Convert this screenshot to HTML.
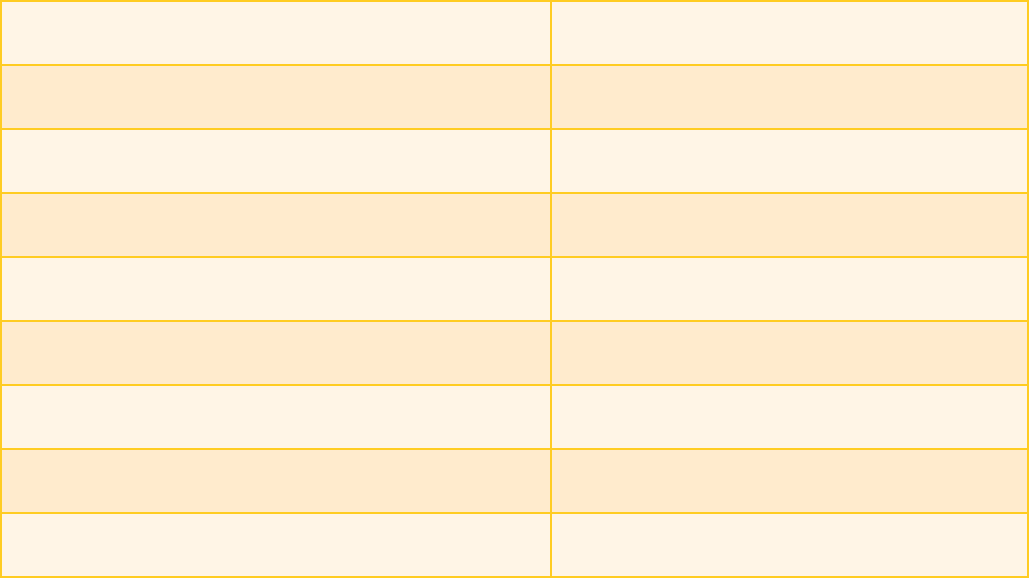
<!DOCTYPE html>
<html><head><meta charset="utf-8"><style>
html,body{margin:0;padding:0;width:1030px;height:579px;background:#fff;overflow:hidden}
.r{position:absolute;left:0;width:1029px;height:64px}
.a{background:#fff5e6}.b{background:#ffebcd}
.h{position:absolute;left:0;width:1029px;height:2px;background:#ffcc22}
.v{position:absolute;top:0;width:2px;height:578px;background:#ffcc22}
</style></head><body>
<div class="r a" style="top:0"></div>
<div class="r b" style="top:64px"></div>
<div class="r a" style="top:128px"></div>
<div class="r b" style="top:192px"></div>
<div class="r a" style="top:256px"></div>
<div class="r b" style="top:320px"></div>
<div class="r a" style="top:384px"></div>
<div class="r b" style="top:448px"></div>
<div class="r a" style="top:512px"></div>
<div class="h" style="top:0"></div>
<div class="h" style="top:64px"></div>
<div class="h" style="top:128px"></div>
<div class="h" style="top:192px"></div>
<div class="h" style="top:256px"></div>
<div class="h" style="top:320px"></div>
<div class="h" style="top:384px"></div>
<div class="h" style="top:448px"></div>
<div class="h" style="top:512px"></div>
<div class="h" style="top:576px"></div>
<div class="v" style="left:0"></div>
<div class="v" style="left:550px"></div>
<div class="v" style="left:1027px"></div>
</body></html>
